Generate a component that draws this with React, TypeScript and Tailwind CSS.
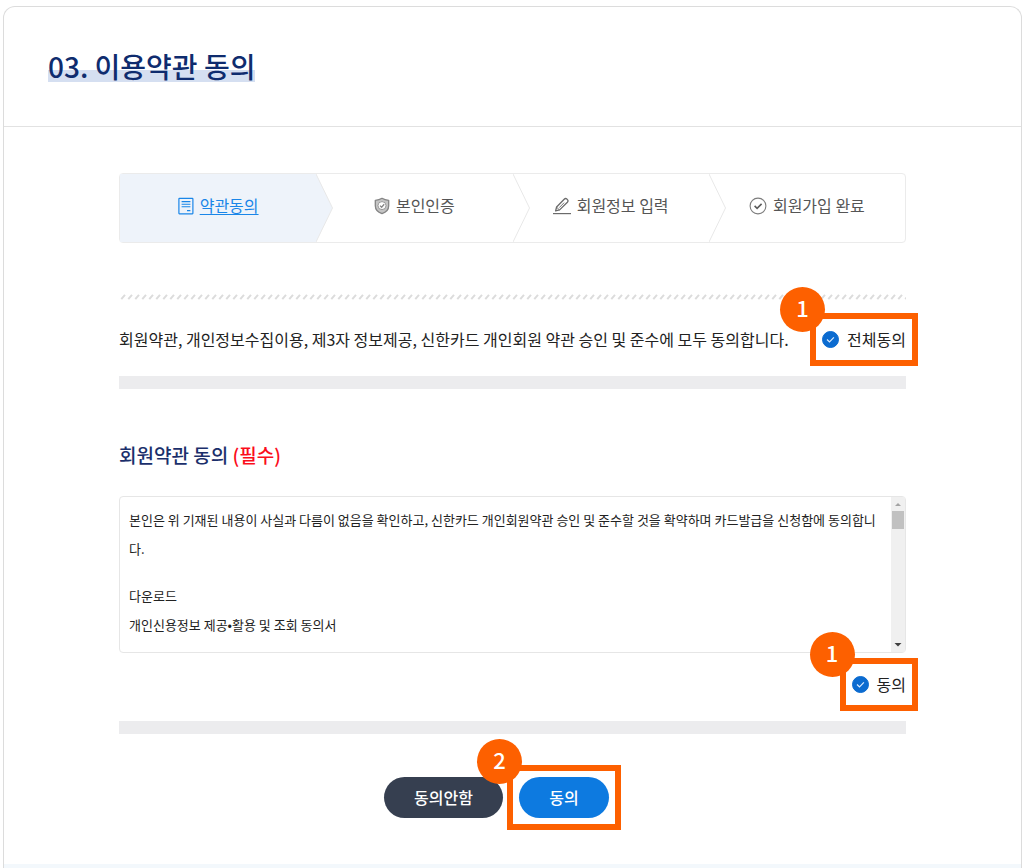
import { useState, type ReactNode } from "react";

function TermsIcon() {
  return (
    <svg width="16" height="18" viewBox="0 0 16 18" fill="none" stroke="currentColor" aria-hidden="true">
      <rect x="0.9" y="1.4" width="14" height="15.4" rx="0.5" strokeWidth="1.2" />
      <path d="M3.6 4.6h8.8M3.6 7.2h8.8M3.6 9.8h8.8M9 13.6h3.4" strokeWidth="1.1" />
    </svg>
  );
}

function ShieldIcon() {
  return (
    <svg width="16" height="18" viewBox="0 0 16 18" fill="none" stroke="#858585" aria-hidden="true">
      <path
        d="M8 1.3C6 2.6 3.6 3.2 1.3 3.3v5.4c0 4 2.8 6.6 6.7 8 3.9-1.4 6.7-4 6.7-8V3.3C12.4 3.2 10 2.6 8 1.3Z"
        fill="#c4c4c4"
        strokeWidth="1.3"
        strokeLinejoin="round"
      />
      <circle cx="8" cy="8.6" r="4" fill="#fff" strokeWidth="0.8" />
      <path d="m6 8.600 1.600 1.600 2.600-3" strokeWidth="1.3" />
    </svg>
  );
}

function PencilIcon() {
  return (
    <svg width="18" height="18" viewBox="0 0 18 18" fill="none" stroke="#6b6b6b" aria-hidden="true">
      <path d="M0 16.6h18" strokeWidth="1.2" />
      <path
        d="m2.600 13.800 1-3.800 7.600-7.800c.8-.8 1.900-.8 2.700-.1l.5.5c.8.8.7 1.800 0 2.600l-7.800 7.700-4 .9Z"
        strokeWidth="1.3"
        strokeLinejoin="round"
      />
      <path d="m3.600 10.200 2.800 2.700M6.300 10.600l4.800-4.900" strokeWidth="0.9" />
    </svg>
  );
}

function DoneIcon() {
  return (
    <svg width="18" height="18" viewBox="0 0 18 18" fill="none" stroke="#7c7c7c" aria-hidden="true">
      <circle cx="9" cy="9" r="7.9" strokeWidth="1.1" />
      <path d="m5.600 8.900 2.500 2.500 4.500-4.500" stroke="#5c5c5c" strokeWidth="1.6" />
    </svg>
  );
}

const steps = [
  { label: "약관동의", icon: <TermsIcon /> },
  { label: "본인인증", icon: <ShieldIcon /> },
  { label: "회원정보 입력", icon: <PencilIcon /> },
  { label: "회원가입 완료", icon: <DoneIcon /> },
];

function Steps() {
  return (
    <ol className="grid h-[70px] grid-cols-4 rounded border border-[#ebebeb]">
      {steps.map((step, i) => (
        <li
          key={step.label}
          className={
            i === 0
              ? "relative flex items-center justify-center gap-1.5 bg-[#eef3fa] pb-1 text-[#1a86e8]"
              : "relative flex items-center justify-center gap-1.5 pb-1 text-[#555]"
          }
          aria-current={i === 0 ? "step" : undefined}
        >
          {step.icon}
          {i === 0 ? (
            <a href="#terms" className="pb-0.5 underline underline-offset-2">
              {step.label}
            </a>
          ) : (
            <span className="pb-0.5">{step.label}</span>
          )}
          {i < 3 && (
            <svg
              className="absolute top-0 left-full h-full w-[17px]"
              viewBox="0 0 17 68"
              preserveAspectRatio="none"
              fill={i === 0 ? "#eef3fa" : "#fff"}
              aria-hidden="true"
            >
              <path d="M0 0 16.500 34 0 68" stroke="#e8e8e8" />
            </svg>
          )}
        </li>
      ))}
    </ol>
  );
}

function Marker({ number }: { number: number }) {
  return (
    <span className="pointer-events-none absolute -inset-3 border-6 border-[#fd6000]">
      <span className="absolute -top-8 -left-9 flex size-[45px] items-center justify-center rounded-full bg-[#fd6000] pb-1.5 text-[22px] leading-none font-medium text-white">
        {number}
      </span>
    </span>
  );
}

function AgreeCheck({ id, label, number }: { id: string; label: string; number: number }) {
  const [checked, setChecked] = useState(true);
  return (
    <div className="relative flex h-[29px] shrink-0 items-center gap-2">
      <span className="grid place-items-center">
        <input
          id={id}
          type="checkbox"
          checked={checked}
          onChange={(e) => setChecked(e.target.checked)}
          className="col-start-1 row-start-1 size-[17px] appearance-none rounded-full border border-[#b5b5b5] checked:border-[#0b6bd0] checked:bg-[#0b6bd0]"
        />
        {checked && (
          <svg
            className="pointer-events-none col-start-1 row-start-1"
            width="17"
            height="17"
            viewBox="0 0 17 17"
            fill="none"
            stroke="#d9ebff"
            strokeWidth="1.2"
            aria-hidden="true"
          >
            <path d="m5 8.500 2.500 2.400 4.400-4.500" />
          </svg>
        )}
      </span>
      <label htmlFor={id} className="pb-0.5">
        {label}
      </label>
      <Marker number={number} />
    </div>
  );
}

function Hatch() {
  return (
    <svg className="block h-[6px] w-full" aria-hidden="true">
      <defs>
        <pattern id="hatch" width="7" height="6" patternUnits="userSpaceOnUse">
          <path d="M2.300 5.200 6 0.800" stroke="#dcdcdc" strokeWidth="2" />
        </pattern>
      </defs>
      <rect width="100%" height="6" fill="url(#hatch)" />
    </svg>
  );
}

function Divider() {
  return <div className="h-[13px] bg-[#ececee]" />;
}

function ScrollRail() {
  return (
    <div className="flex w-[14px] shrink-0 flex-col items-center bg-[#f0f0f0]" aria-hidden="true">
      <svg width="14" height="14" viewBox="0 0 14 14" fill="#a3a3a3">
        <path d="M4 9h6L7 6Z" />
      </svg>
      <div className="h-[18px] w-3 bg-[#c1c1c1]" />
      <svg className="mt-auto" width="14" height="14" viewBox="0 0 14 14" fill="#404040">
        <path d="M3.500 5h7L7 8.500Z" />
      </svg>
    </div>
  );
}

function PillButton({ children, className }: { children: ReactNode; className: string }) {
  return (
    <button type="button" className={`h-[41px] rounded-full pb-0.5 text-base font-medium text-white ${className}`}>
      {children}
    </button>
  );
}

export default function App() {
  return (
    <div className="flex min-h-screen flex-col bg-white pt-[6px] pr-[5px] pl-[3px] font-['Noto_Sans_CJK_KR','Noto_Sans',sans-serif] text-[#222]">
      <main className="flex grow flex-col rounded-t-xl border border-b-0 border-[#dcdcdc] text-base leading-6">
        <header className="border-b border-[#e2e2e2] px-11 pt-10 pb-[41px]">
          <h1 className="flex h-[38px] items-center text-[28px] leading-8 font-medium text-[#0f2c6e]">
            <span className="bg-[linear-gradient(to_top,#d5dff1_12px,transparent_12px)]">03. 이용약관 동의</span>
          </h1>
        </header>

        <div className="grow px-[115px] pt-[46px] pb-11">
          <Steps />

          <div className="mt-[51px]">
            <Hatch />
          </div>

          <div className="mt-[25px] mb-[22px] flex items-center justify-between gap-4">
            <p className="pb-0.5">
              회원약관, 개인정보수집이용, 제3자 정보제공, 신한카드 개인회원 약관 승인 및 준수에 모두 동의합니다.
            </p>
            <AgreeCheck id="agree-all" label="전체동의" number={1} />
          </div>
          <Divider />

          <section id="terms">
            <h2 className="mt-[50px] mb-[25px] text-[19px] leading-8 font-medium text-[#1b2f6b]">
              회원약관 동의 <span className="text-[#fb0d1b]">(필수)</span>
            </h2>
            <div className="flex h-[157px] rounded border border-[#e6e6e6]">
              <div className="min-w-0 grow overflow-hidden py-2 pl-[9px] text-[13px] leading-[29px]" tabIndex={0}>
                <p>
                  본인은 위 기재된 내용이 사실과 다름이 없음을 확인하고, 신한카드 개인회원약관 승인 및 준수할 것을 확약하며
                  카드발급을 신청함에 동의합니
                  <wbr />
                  다.
                </p>
                <p className="mt-[18px]">
                  다운로드
                  <br />
                  개인신용정보 제공•활용 및 조회 동의서
                </p>
              </div>
              <ScrollRail />
            </div>
          </section>

          <div className="mt-[17px] mb-[22px] flex justify-end">
            <AgreeCheck id="agree-terms" label="동의" number={1} />
          </div>
          <Divider />

          <div className="mt-[43px] flex justify-center gap-4 pr-8">
            <PillButton className="w-[119px] bg-[#363f50]">동의안함</PillButton>
            <div className="relative flex">
              <PillButton className="w-[90px] bg-[#0d7ae0]">동의</PillButton>
              <Marker number={2} />
            </div>
          </div>
        </div>

        <div className="h-1 bg-[#f3f8fc]" />
      </main>
    </div>
  );
}
